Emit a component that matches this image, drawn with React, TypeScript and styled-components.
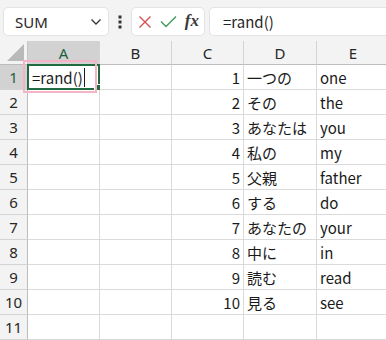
import React from 'react';
import styled, { createGlobalStyle } from 'styled-components';

const GlobalStyle = createGlobalStyle`
    html, body {
        margin: 0;
        padding: 0;
        background: #ffffff;
    }
    body {
        font-family: "Noto Sans CJK JP", "Noto Sans", sans-serif;
        width: 386px;
        height: 340px;
        overflow: hidden;
    }
`;

const Page = styled.div`
    display: flex;
    flex-direction: column;
    width: 386px;
    height: 340px;
    overflow: hidden;
`;

const Toolbar = styled.div`
    display: flex;
    align-items: flex-start;
    height: 44px;
    padding: 7px 0 0 3px;
    box-sizing: border-box;
    background: #f3f3f3;
`;

const Box = styled.div`
    height: 29px;
    box-sizing: border-box;
    background: #ffffff;
    border: 1px solid #e3e3e3;
    border-radius: 5px;
    display: flex;
    align-items: center;
`;

const NameBox = styled(Box)`
    width: 106px;
    padding: 0 6px 0 11px;
    justify-content: space-between;
    font-family: "Noto Sans", sans-serif;
    font-size: 15px;
    color: #262626;
`;

const Dots = styled.div`
    width: 22px;
    height: 29px;
    display: flex;
    align-items: center;
    justify-content: center;
`;

const ButtonBox = styled(Box)`
    width: 74px;
    padding: 0 5px 0 6px;
    justify-content: space-between;
`;

const Fx = styled.span`
    font-family: "Liberation Serif", serif;
    font-style: italic;
    font-weight: bold;
    font-size: 17px;
    color: #3a3a3a;
    margin-top: -2px;
`;

const FormulaBox = styled(Box)`
    flex: 1;
    margin-left: 4px;
    border-right: none;
    border-radius: 5px 0 0 5px;
    padding-left: 13px;
    font-size: 15px;
    color: #262626;
`;

const Grid = styled.div`
    display: grid;
    grid-template-columns: 28px 72px 72px 72px 73px 73px;
    grid-auto-rows: 25px;
    grid-template-rows: 24px;
`;

const Corner = styled.div`
    background: #f3f3f3;
    border-right: 1px solid #c6c6c6;
    border-bottom: 1px solid #bdbdbd;
    box-sizing: border-box;
    display: flex;
    align-items: flex-end;
    justify-content: flex-end;
    padding: 0 3px 3px 0;
`;

const ColHead = styled.div<{ $active?: boolean }>`
    background: ${p => (p.$active ? '#d2d2d2' : '#f3f3f3')};
    color: ${p => (p.$active ? '#1d5f3b' : '#262626')};
    border-right: 1px solid #d4d4d4;
    border-bottom: 1px solid #bdbdbd;
    box-sizing: border-box;
    display: flex;
    align-items: center;
    justify-content: center;
    font-family: "Noto Sans", sans-serif;
    font-size: 15px;
    padding-top: 1px;
`;

const RowHead = styled.div<{ $active?: boolean }>`
    background: ${p => (p.$active ? '#d2d2d2' : '#f3f3f3')};
    color: ${p => (p.$active ? '#1d5f3b' : '#262626')};
    border-right: 1px solid #bdbdbd;
    border-bottom: 1px solid #d4d4d4;
    box-sizing: border-box;
    display: flex;
    align-items: center;
    justify-content: center;
    font-family: "Noto Sans", sans-serif;
    font-size: 15px;
`;

const Cell = styled.div<{ $align?: 'left' | 'right' }>`
    position: relative;
    border-right: 1px solid #dadada;
    border-bottom: 1px solid #dadada;
    box-sizing: border-box;
    display: flex;
    align-items: center;
    justify-content: ${p => (p.$align === 'right' ? 'flex-end' : 'flex-start')};
    padding: 0 3px 0 3px;
    font-size: 15px;
    color: #1a1a1a;
    white-space: nowrap;
`;

const ActiveBorder = styled.div`
    position: absolute;
    left: -1px;
    top: -1px;
    right: -1px;
    bottom: -1px;
    border: 2px solid #1f6b3f;
    pointer-events: none;
`;

const Handle = styled.div`
    position: absolute;
    right: -3px;
    bottom: -3px;
    width: 5px;
    height: 5px;
    background: #1f6b3f;
    border: 1px solid #ffffff;
`;

const PinkMark = styled.div`
    position: absolute;
    left: -5px;
    top: -5px;
    width: 74px;
    height: 33px;
    border: 2.5px solid #f4b3c6;
    box-sizing: border-box;
    pointer-events: none;
`;

const Caret = styled.span`
    display: inline-block;
    width: 1px;
    height: 19px;
    background: #1a1a1a;
    margin-left: 1px;
`;

const EditText = styled.span`
    display: flex;
    align-items: center;
    padding-left: 1px;
`;

const rows: [string, string, string][] = [
    ['1', '一つの', 'one'],
    ['2', 'その', 'the'],
    ['3', 'あなたは', 'you'],
    ['4', '私の', 'my'],
    ['5', '父親', 'father'],
    ['6', 'する', 'do'],
    ['7', 'あなたの', 'your'],
    ['8', '中に', 'in'],
    ['9', '読む', 'read'],
    ['10', '見る', 'see'],
    ['', '', ''],
];

const Chevron = () => (
    <svg width="12" height="8" viewBox="0 0 12 8">
        <path d="M1.5 1.5 L6 6 L10.5 1.5" fill="none" stroke="#333" strokeWidth="1.3" />
    </svg>
);

const VDots = () => (
    <svg width="4" height="14" viewBox="0 0 4 14">
        <rect x="0.5" y="0.5" width="3" height="3" fill="#333" />
        <rect x="0.5" y="5.5" width="3" height="3" fill="#333" />
        <rect x="0.5" y="10.5" width="3" height="3" fill="#333" />
    </svg>
);

const Cross = () => (
    <svg width="14" height="14" viewBox="0 0 14 14">
        <path d="M1.5 1.5 L12.5 12.5 M12.5 1.5 L1.5 12.5" stroke="#d8504e" strokeWidth="1.4" fill="none" />
    </svg>
);

const Check = () => (
    <svg width="17" height="13" viewBox="0 0 17 13">
        <path d="M1 6.5 L6 11.5 L16 1.5" stroke="#3f9a5d" strokeWidth="1.4" fill="none" />
    </svg>
);

const CornerTriangle = () => (
    <svg width="17" height="17" viewBox="0 0 17 17">
        <polygon points="17,0 17,17 0,17" fill="#b9b9b9" />
    </svg>
);

const App = () => {
    const headers = ['A', 'B', 'C', 'D', 'E'];

    return (
        <Page>
            <GlobalStyle />
            <Toolbar>
                <NameBox>
                    <span>SUM</span>
                    <Chevron />
                </NameBox>
                <Dots>
                    <VDots />
                </Dots>
                <ButtonBox>
                    <Cross />
                    <Check />
                    <Fx>fx</Fx>
                </ButtonBox>
                <FormulaBox>=rand()</FormulaBox>
            </Toolbar>
            <Grid>
                <Corner>
                    <CornerTriangle />
                </Corner>
                {headers.map(h => (
                    <ColHead key={h} $active={h === 'A'}>{h}</ColHead>
                ))}
                {rows.map((r, i) => (
                    <React.Fragment key={i}>
                        <RowHead $active={i === 0}>{i + 1}</RowHead>
                        <Cell>
                            {i === 0 && (
                                <>
                                    <EditText>=rand()<Caret /></EditText>
                                    <ActiveBorder>
                                        <Handle />
                                    </ActiveBorder>
                                    <PinkMark />
                                </>
                            )}
                        </Cell>
                        <Cell />
                        <Cell $align="right">{r[0]}</Cell>
                        <Cell>{r[1]}</Cell>
                        <Cell>{r[2]}</Cell>
                    </React.Fragment>
                ))}
            </Grid>
        </Page>
    );
};

export default App;
